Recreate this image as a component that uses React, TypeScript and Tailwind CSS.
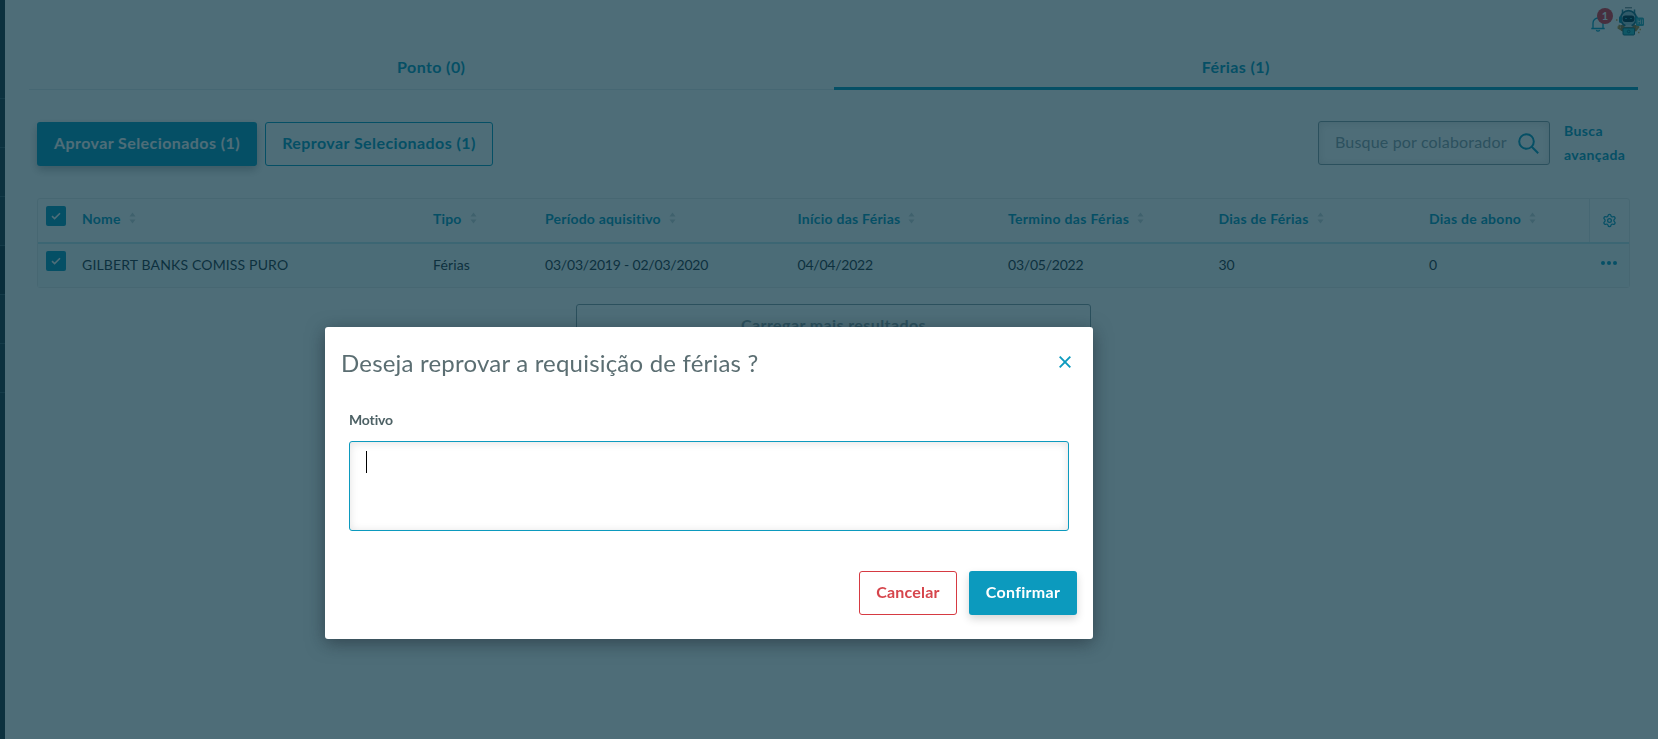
import { useState } from "react";
import { Settings } from "lucide-react";

type Column = {
  label: string;
  value: string;
  labelClass: string;
  valueClass: string;
};

const columns: Column[] = [
  { label: "Nome", value: "GILBERT BANKS COMISS PURO", labelClass: "tracking-[0.2px]", valueClass: "tracking-[0.15px]" },
  { label: "Tipo", value: "Férias", labelClass: "tracking-[0.15px]", valueClass: "tracking-[0.15px]" },
  { label: "Período aquisitivo", value: "03/03/2019 - 02/03/2020", labelClass: "tracking-[0.2px]", valueClass: "tracking-[-0.19px]" },
  { label: "Início das Férias", value: "04/04/2022", labelClass: "tracking-[0.25px]", valueClass: "tracking-[-0.22px]" },
  { label: "Termino das Férias", value: "03/05/2022", labelClass: "tracking-[0.32px]", valueClass: "tracking-[-0.22px]" },
  { label: "Dias de Férias", value: "30", labelClass: "tracking-[0.27px]", valueClass: "tracking-[0px]" },
  { label: "Dias de abono", value: "0", labelClass: "tracking-[0.27px]", valueClass: "tracking-[0px]" },
];

const gridCols =
  "grid grid-cols-[44px_351px_112px_252.5px_210.5px_210.5px_210.5px_160px_1fr]";

const SortIcon = () => (
  <svg width="7" height="12" viewBox="0 0 7 12" className="ml-2 mb-[2px] shrink-0 fill-[#cdd6d9]">
    <path d="M3.5 0.5 6.5 4.5h-6zM3.5 11.5 0.5 7.5h6z" />
  </svg>
);

const Checkbox = () => (
  <span className="flex size-5 items-center justify-center rounded-[2px] bg-[#0c9abe]">
    <svg width="10" height="8" viewBox="0 0 10 8" fill="none" className="stroke-white">
      <path d="M1 4.2 3.6 6.6 9 1.2" strokeWidth="1.6" />
    </svg>
  </span>
);

const Avatar = () => (
  <svg width="30" height="30" viewBox="0 0 30 30">
    <path d="M10 .8h7" stroke="#50666f" strokeWidth="1" />
    <path d="M7.500 2.500v5M19.500 2.500v5" stroke="#2c7d94" strokeWidth="1.500" />
    <path d="M5 18l-1 3 5 3M21 18l2 2-3 4" stroke="#b3863a" strokeWidth="2.500" fill="none" />
    <path d="M6 18h15v6H6z" fill="#94733f" />
    <circle cx="13.500" cy="11.500" r="7.800" fill="#9cc0cc" stroke="#1b6a82" strokeWidth="1.800" />
    <rect x="4" y="9" width="3" height="7" rx="1.500" fill="#1288a3" />
    <rect x="20" y="9" width="3" height="7" rx="1.500" fill="#1288a3" />
    <rect x="7.500" y="8.500" width="12" height="6.500" rx="3" fill="#062f44" />
    <path d="M10 11.500h2M15 11.500h2" stroke="#2594ac" strokeWidth="1.200" />
    <path d="M9 20l2-2h5l2 2z" fill="#bccdd2" />
    <rect x="8" y="21" width="11.500" height="7" rx="1" fill="#2fb4bf" stroke="#0d6a80" />
    <circle cx="13.700" cy="24.500" r="1.300" fill="none" stroke="#0d6a80" />
    <rect x="21" y="10.500" width="8" height="8.500" rx="1.500" fill="#2fa9ba" />
    <path d="M23 12.500v4.500M25.500 12.500v4.500M23 14.500h2.500M27.500 12.500v4.500" stroke="#c3e2e6" strokeWidth=".8" />
    <path d="M1 13h1.500M2.500 20h1M24.500 22.500H26M23 25.500h1.500" stroke="#d89b3c" strokeWidth="1.500" />
  </svg>
);

function RejectModal() {
  const [reason, setReason] = useState("");

  return (
    <div className="fixed inset-0 flex items-start bg-[#032f3e]/70 pl-[325px] pt-[327px]">
      <div className="h-[312px] w-[768px] rounded-[3px] bg-white px-4 shadow-[0_4px_18px_rgba(20,30,40,0.5)]">
        <div className="flex h-[73px] items-center justify-between pr-[6px]">
          <h2 className="pb-[2px] text-[24px] tracking-[0.2px] text-[#5b6e72]">
            Deseja reprovar a requisição de férias ?
          </h2>
          <button aria-label="Fechar" className="mb-[3px]">
            <svg width="12" height="12" viewBox="0 0 12 12" className="stroke-[#0c9abe]">
              <path d="M.7.7l10.600 10.600M11.300.7L.7 11.300" strokeWidth="1.900" />
            </svg>
          </button>
        </div>

        <div className="px-2">
          <label className="block pt-[9px] text-[14px] leading-[22px] font-bold tracking-[-0.15px] text-[#4d6165]">
            Motivo
          </label>
          <div className="relative mt-[10px] h-[90px]">
            <textarea
              value={reason}
              onChange={(e) => setReason(e.target.value)}
              className="block h-[90px] w-full resize-none rounded-[3px] border border-[#0c9abe] px-4 py-2 shadow-[inset_0_1px_8px_rgba(0,0,0,0.12)] outline-none"
            />
            {/* cursor */}
            <span className="absolute left-[17px] top-[10px] h-[22px] w-px bg-black" />
          </div>
        </div>

        <div className="mt-10 flex justify-end gap-3">
          <button className="h-11 w-[98px] rounded-[3px] border border-[#d63a42] pb-[2px] text-[16px] font-bold tracking-[0.2px] text-[#d6454c]">
            Cancelar
          </button>
          <button className="h-11 w-[108px] rounded-[3px] bg-[#0c9abe] pb-[2px] text-[16px] font-bold tracking-[0.3px] text-white shadow-[0_4px_8px_rgba(0,0,0,0.16)]">
            Confirmar
          </button>
        </div>
      </div>
    </div>
  );
}

export default function App() {
  return (
    <div className="flex h-[739px] w-[1658px] overflow-hidden bg-white font-[Lato,sans-serif] text-[#0c9abe]">
      {/* Menu lateral recolhido */}
      <aside className="flex w-[5px] shrink-0 flex-col bg-[#243640]">
        <span className="h-[99px] border-b border-[#3d5560]" />
        <span className="h-[49px] border-b border-[#3d5560]" />
        <span className="h-[49px] border-b border-[#3d5560]" />
        <span className="h-[49px] border-b border-[#3d5560]" />
        <span className="h-[49px] border-b border-[#3d5560] bg-[#182832]" />
        <span className="h-[49px] border-b border-[#3d5560]" />
        <span className="h-[49px] border-b border-[#3d5560]" />
      </aside>

      <main className="flex-1 pl-6 pr-5">
        <header className="flex h-[46px] items-start justify-end pt-[7px]">
          <div className="relative mr-[10px] mt-[9px]">
            <svg width="14" height="16" viewBox="0 0 14 16" fill="none" className="stroke-[#0c9abe]">
              <path d="M.3 12.500h13.400M2 12.500V7a5 5 0 0 1 10 0v5.500M5.200 14.200q1.800 1.800 3.600 0" strokeWidth="1.300" />
            </svg>
            <span className="absolute -top-[8px] left-[6px] flex size-4 items-center justify-center rounded-full bg-[#e8303e] text-[11px] font-bold text-white">
              1
            </span>
          </div>
          <div className="-mr-[7px]">
            <Avatar />
          </div>
        </header>

        <nav className="grid h-11 grid-cols-2 text-[16px] font-bold tracking-[0.4px]">
          <button className="border-b border-[#e4eaed] pb-[2px]">Ponto (0)</button>
          <button className="border-b-[3px] border-[#0c9abe]">Férias (1)</button>
        </nav>

        <section className="px-2">
          <div className="mt-[31px] flex h-11 items-center justify-between">
            <div className="mt-[2px] flex gap-2">
              <button className="h-11 w-[220px] rounded-[3px] bg-[#0c9abe] pb-[2px] text-[16px] font-bold tracking-[0.42px] text-white shadow-[0_4px_8px_rgba(0,0,0,0.25)]">
                Aprovar Selecionados (1)
              </button>
              <button className="h-11 w-[228px] rounded-[3px] border border-[#0c9abe] pb-[2px] text-[16px] font-bold tracking-[0.42px]">
                Reprovar Selecionados (1)
              </button>
            </div>
            <div className="flex items-center">
              <div className="flex h-11 w-[232px] items-center justify-between rounded-[3px] border border-[#899da5] pl-4 pr-[10px] shadow-[inset_0_1px_8px_rgba(0,0,0,0.12)]">
                <input
                  placeholder="Busque por colaborador"
                  className="w-[172px] pb-[2px] text-[16px] tracking-[0.17px] outline-none placeholder:text-[#8ea0a8]"
                />
                <svg width="21" height="21" viewBox="0 0 21 21" fill="none" className="stroke-[#0c9abe]">
                  <circle cx="8.500" cy="8.500" r="7.300" strokeWidth="2" />
                  <path d="M13.500 13.500l6.700 6.700" strokeWidth="2" />
                </svg>
              </div>
              <a className="ml-[14px] w-[66px] text-[14px] leading-6 font-bold tracking-[0.4px]">Busca avançada</a>
            </div>
          </div>

          {/* Tabela */}
          <div className="mt-[33px] rounded-[3px] border border-[#e6eaec]">
            <div className={`${gridCols} h-[45px] border-b-2 border-[#c3e8ef] text-[14px] font-bold`}>
              <div className="pl-2 pt-[7px]">
                <Checkbox />
              </div>
              {columns.map((c) => (
                <div key={c.label} className="flex items-center pb-[4px] whitespace-nowrap">
                  <span className={c.labelClass}>{c.label}</span>
                  <SortIcon />
                </div>
              ))}
              <div className="flex items-center justify-center border-l border-[#e4eaed]">
                <Settings size={15} strokeWidth={2} />
              </div>
            </div>
            <div className={`${gridCols} h-[43px] bg-[#f5fbfa] text-[14px] text-[#2a343e]`}>
              <div className="pl-2 pt-[7px]">
                <Checkbox />
              </div>
              {columns.map((c) => (
                <div key={c.label} className="flex items-center pb-[3px] whitespace-nowrap">
                  <span className={c.valueClass}>{c.value}</span>
                </div>
              ))}
              <button aria-label="Ações" className="flex items-center justify-center gap-[2px] pb-[5px]">
                <span className="size-1 rounded-full bg-[#0c9abe]" />
                <span className="size-1 rounded-full bg-[#0c9abe]" />
                <span className="size-1 rounded-full bg-[#0c9abe]" />
              </button>
            </div>
          </div>

          <button className="mx-auto mt-4 block h-11 w-[515px] rounded-[3px] border border-[#899da5] pb-[2px] text-[16px] font-bold tracking-[0.4px] text-[#8ea0a8]">
            Carregar mais resultados
          </button>
        </section>
      </main>

      <RejectModal />
    </div>
  );
}
